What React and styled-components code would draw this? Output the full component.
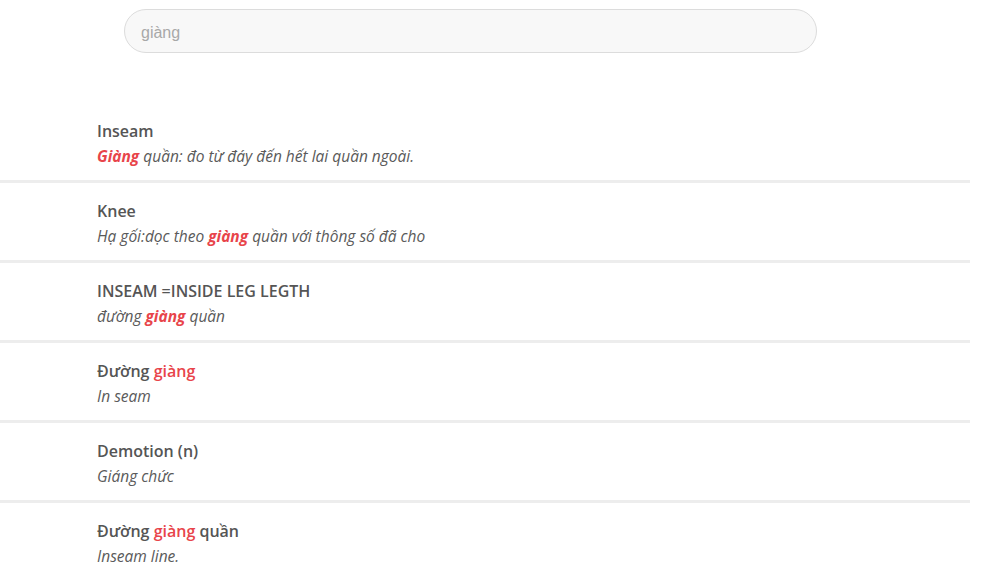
import styled, { createGlobalStyle } from 'styled-components';

const GlobalStyle = createGlobalStyle`
	* {
		box-sizing: border-box;
	}
	body {
		margin: 0;
		background: #fff;
		font-family: 'Open Sans', 'Noto Sans', sans-serif;
	}
`;

const Page = styled.div`
	width: 997px;
	padding-top: 9px;
`;

const SearchRow = styled.div`
	padding-left: 124px;
`;

const SearchInput = styled.input`
	display: block;
	width: 693px;
	height: 44px;
	padding: 3px 16px 0;
	border: 1px solid #dcdcdc;
	border-radius: 22px;
	background: #f8f8f8;
	font-family: 'Liberation Sans', Arial, sans-serif;
	font-size: 16px;
	color: #a8a8a8;
	outline: none;
`;

const List = styled.ul`
	list-style: none;
	margin: 50px 0 0;
	padding: 0;
	width: 970px;
`;

const Item = styled.li`
	padding: 16px 0 11px 97px;
	border-bottom: 3px solid #ededed;
`;

const Term = styled.div`
	font-size: 16px;
	font-weight: 600;
	line-height: 25px;
	color: #555;
`;

const Meaning = styled.div`
	font-size: 15.5px;
	font-style: italic;
	line-height: 25px;
	color: #5a5a5a;
`;

const Hit = styled.span`
	color: #e8444a;
	font-weight: ${({ $bold }) => ($bold ? 700 : 'inherit')};
`;

const entries = [
	{
		term: ['Inseam'],
		meaning: [{ hit: 'Giàng' }, ' quần: đo từ đáy đến hết lai quần ngoài.'],
	},
	{
		term: ['Knee'],
		meaning: ['Hạ gối:dọc theo ', { hit: 'giàng' }, ' quần với thông số đã cho'],
	},
	{
		term: ['INSEAM =INSIDE LEG LEGTH'],
		meaning: ['đường ', { hit: 'giàng' }, ' quần'],
	},
	{
		term: ['Đường ', { hit: 'giàng' }],
		meaning: ['In seam'],
	},
	{
		term: ['Demotion (n)'],
		meaning: ['Giáng chức'],
	},
	{
		term: ['Đường ', { hit: 'giàng' }, ' quần'],
		meaning: ['Inseam line.'],
	},
];

const renderParts = (parts, bold) =>
	parts.map((p, i) =>
		typeof p === 'string' ? (
			p
		) : (
			<Hit key={i} $bold={bold}>
				{p.hit}
			</Hit>
		)
	);

const App = () => {
	return (
		<Page>
			<GlobalStyle />
			<SearchRow>
				<SearchInput defaultValue='giàng' />
			</SearchRow>
			<List>
				{entries.map((e, i) => (
					<Item key={i}>
						<Term>{renderParts(e.term, false)}</Term>
						<Meaning>{renderParts(e.meaning, true)}</Meaning>
					</Item>
				))}
			</List>
		</Page>
	);
};

export default App;
